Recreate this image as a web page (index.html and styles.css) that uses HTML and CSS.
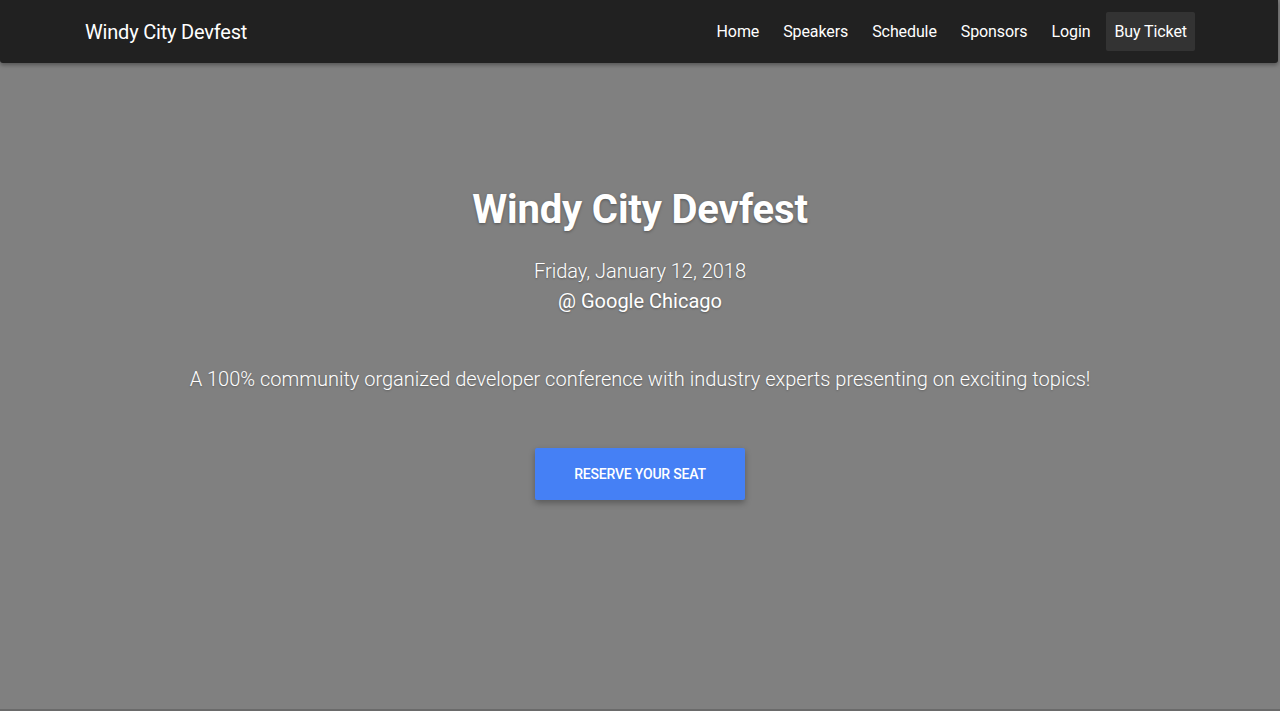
FILE: index.html
```html
<!DOCTYPE html>
<html lang="en">
<head>
<meta charset="utf-8">
<title>Windy City Devfest</title>
<link rel="stylesheet" href="styles.css">
</head>
<body>
<div class="page">
  <header class="navbar">
    <div class="nav-inner">
      <a class="brand" href="#">Windy City Devfest</a>
      <nav class="nav-links">
        <a href="#">Home</a>
        <a href="#">Speakers</a>
        <a href="#">Schedule</a>
        <a href="#">Sponsors</a>
        <a href="#">Login</a>
        <a href="#" class="active">Buy Ticket</a>
      </nav>
    </div>
  </header>
  <main class="hero">
    <h1 class="title">Windy City Devfest</h1>
    <p class="date">Friday, January 12, 2018<br><span class="venue">@ Google Chicago</span></p>
    <p class="tagline">A 100% community organized developer conference with industry experts presenting on exciting topics!</p>
    <a href="#" class="cta">Reserve your seat</a>
  </main>
</div>
</body>
</html>
```
FILE: styles.css
```css
html, body {
  margin: 0;
  padding: 0;
  height: 100%;
}
body {
  font-family: Roboto, "Liberation Sans", sans-serif;
  background: #808080;
  color: #fff;
  overflow: hidden;
}
a { color: inherit; text-decoration: none; }
.page {
  height: 711px;
  display: flex;
  flex-direction: column;
  border-bottom: 2px solid #6a6a6a;
  box-sizing: border-box;
}
.navbar {
  height: 63px;
  background: #212121;
  box-shadow: 0 2px 4px rgba(0,0,0,0.35);
  border-radius: 0 0 3px 3px;
  margin-right: 2px;
  flex: none;
  position: relative;
  z-index: 1;
}
.nav-inner {
  height: 100%;
  display: flex;
  align-items: center;
  justify-content: space-between;
  padding: 0 83px 0 85px;
}
.brand {
  font-size: 20px;
  font-weight: 400;
  letter-spacing: -0.2px;
  padding-top: 1px;
}
.nav-links {
  display: flex;
  align-items: center;
  gap: 8px;
}
.nav-links a {
  font-size: 16px;
  font-weight: 400;
  letter-spacing: -0.1px;
  padding: 0 8px;
  height: 39px;
  line-height: 39px;
}
.nav-links a.active {
  background: #333333;
  border-radius: 2px;
}
.hero {
  flex: 1;
  display: flex;
  flex-direction: column;
  align-items: center;
  text-align: center;
  padding-top: 121px;
}
.title {
  margin: 0;
  font-size: 40px;
  font-weight: 700;
  line-height: 52px;
  letter-spacing: -0.15px;
  text-shadow: 0 1px 3px rgba(0,0,0,0.35);
}
.date {
  margin: 20px 0 0;
  font-size: 20px;
  font-weight: 300;
  line-height: 30px;
  text-shadow: 0 1px 2px rgba(0,0,0,0.3);
}
.venue {
  font-weight: 400;
}
.tagline {
  margin: 48px 0 0;
  font-size: 20px;
  font-weight: 300;
  line-height: 30px;
  text-shadow: 0 1px 2px rgba(0,0,0,0.25);
}
.cta {
  margin-top: 54px;
  width: 210px;
  height: 52px;
  line-height: 52px;
  background: #4580f5;
  font-size: 14px;
  font-weight: 500;
  text-transform: uppercase;
  letter-spacing: -0.2px;
  box-shadow: 0 3px 6px rgba(0,0,0,0.3);
  border-radius: 2px;
}
```
